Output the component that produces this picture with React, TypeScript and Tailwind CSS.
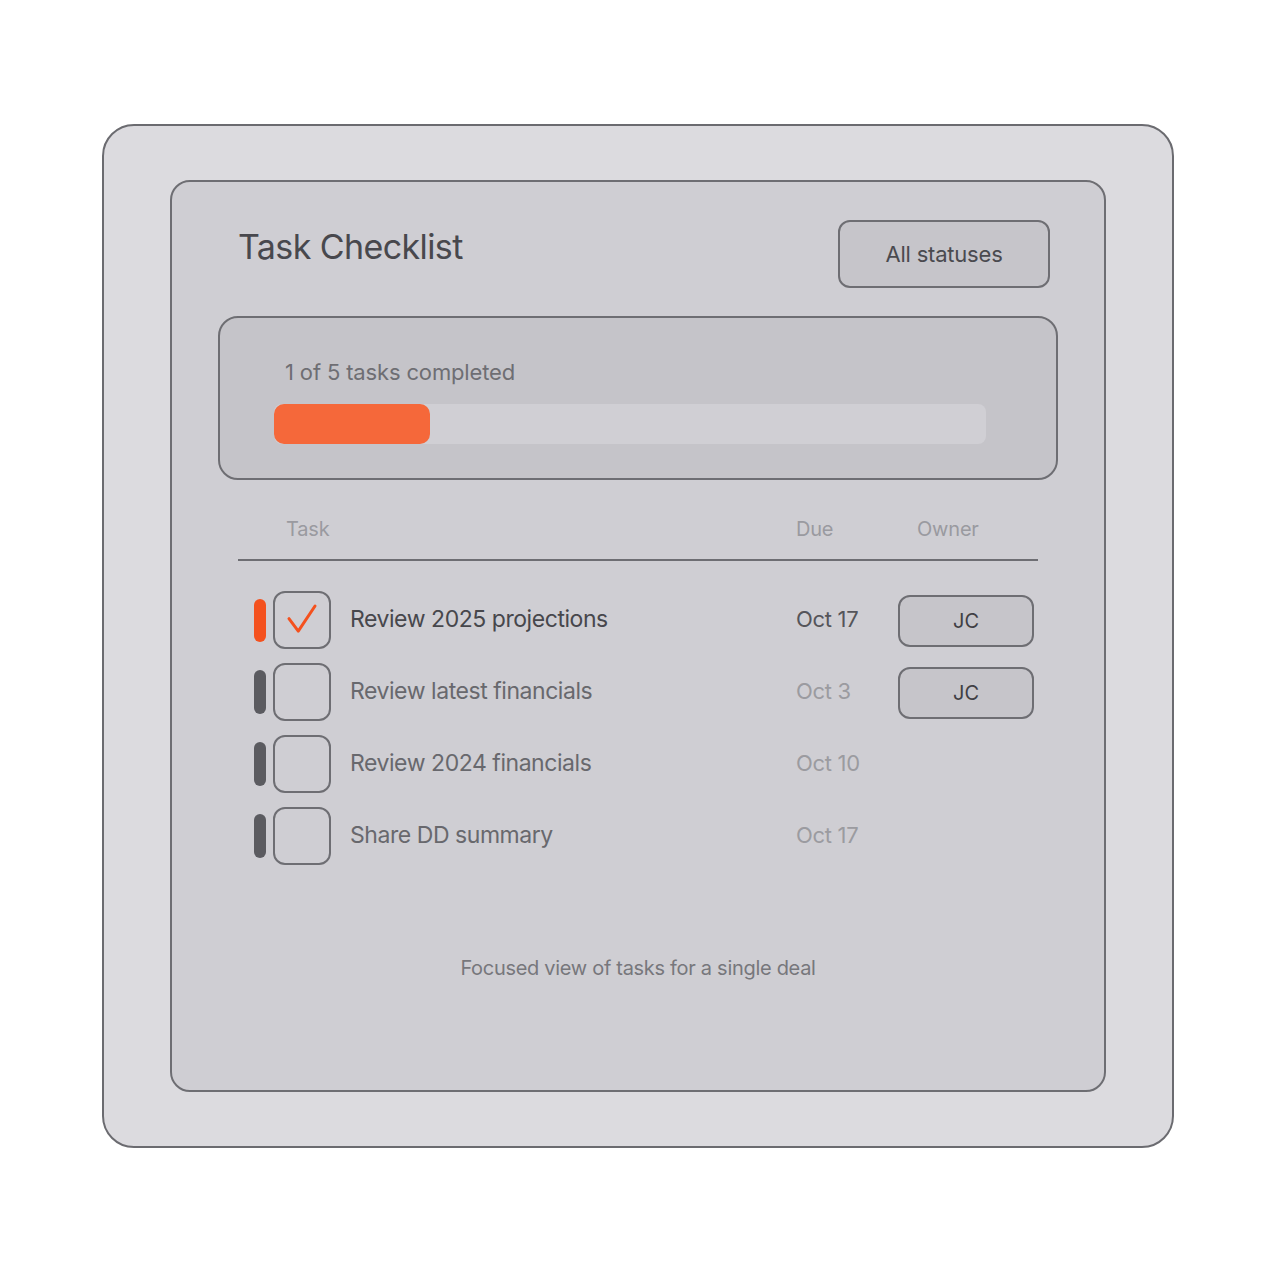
import React from 'react';

interface Task {
  title: string;
  due: string;
  owner?: string;
  done: boolean;
}

const tasks: Task[] = [
  { title: 'Review 2025 projections', due: 'Oct 17', owner: 'JC', done: true },
  { title: 'Review latest financials', due: 'Oct 3', owner: 'JC', done: false },
  { title: 'Review 2024 financials', due: 'Oct 10', done: false },
  { title: 'Share DD summary', due: 'Oct 17', done: false },
];

const TOTAL = 5;

function TaskRow({ task }: { key?: React.Key; task: Task }) {
  return (
    <div className="grid h-[58px] grid-cols-[112px_446px_102px_136px] items-center">
      <div className="flex items-center pl-[16px]">
        <div className={task.done ? 'h-[43px] w-[12px] rounded-full bg-[#f4511e]' : 'h-[44px] w-[12px] rounded-full bg-[#5b5b60]'} />
        <div className="ml-[7px] flex h-[58px] w-[58px] items-center justify-center rounded-[12px] border-2 border-[#6e6e73]">
          {task.done && (
            <svg width="58" height="58" viewBox="0 0 58 58" fill="none">
              <path d="M15 27.5 L25 41 L43 14" stroke="#f4511e" strokeWidth="3.2" strokeLinecap="round" strokeLinejoin="round" />
            </svg>
          )}
        </div>
      </div>
      <div className={task.done ? 'mt-[-1px] text-[23px] tracking-[-0.45px] text-[#47474c]' : 'mt-[-1px] text-[23px] tracking-[-0.45px] text-[#68686d]'}>{task.title}</div>
      <div className={task.done ? 'mt-[-1px] text-[22px] tracking-[-0.3px] text-[#55555a]' : 'mt-[-1px] text-[22px] tracking-[-0.3px] text-[#9b9ba0]'}>{task.due}</div>
      <div>
        {task.owner && (
          <div className="mt-[2px] flex h-[52px] w-[136px] items-center justify-center rounded-[12px] border-2 border-[#6e6e73] bg-[#c6c5ca] text-[20px] text-[#3f3f44]">
            {task.owner}
          </div>
        )}
      </div>
    </div>
  );
}

export default function App() {
  const completed = tasks.filter(t => t.done).length;

  return (
    <div className="min-h-[1280px] bg-white pl-[102px] pt-[124px] font-['Inter',_'Liberation_Sans',_sans-serif]">
      <div className="w-[1072px] h-[1024px] rounded-[32px] border-2 border-[#6b6b70] bg-[#dcdbdf] pl-[66px] pt-[54px]">
        <div className="flex h-[912px] w-[936px] flex-col rounded-[20px] border-2 border-[#6e6e73] bg-[#cfced3]">
          {/* header */}
          <div className="flex items-start justify-between pl-[66px] pr-[54px] pt-[38px]">
            <h1 className="mt-[7px] text-[34px] leading-[40px] tracking-[-0.6px] text-[#48484d]">Task Checklist</h1>
            <button className="h-[68px] w-[212px] rounded-[12px] border-2 border-[#6e6e73] bg-[#c6c5ca] text-[22px] tracking-[-0.2px] text-[#4a4a4f]">
              All statuses
            </button>
          </div>

          {/* progress */}
          <div className="mx-[46px] mt-[28px] h-[164px] rounded-[20px] border-2 border-[#6e6e73] bg-[#c5c4c9] pl-[54px] pr-[70px] pt-[38px]">
            <div className="pl-[11px] text-[22px] leading-[32px] tracking-[-0.15px] text-[#6e6e73]">
              {completed} of {TOTAL} tasks completed
            </div>
            <div className="mt-[16px] h-[40px] w-[712px] rounded-[8px] bg-[#d0cfd4]">
              <div className="h-[40px] w-[156px] rounded-[10px] bg-[#f5683a]" />
            </div>
          </div>

          {/* table */}
          <div className="mx-[66px] mt-[30px]">
            <div className="grid h-[38px] grid-cols-[112px_446px_102px_136px] items-center text-[20px] tracking-[-0.2px] text-[#9a9aa0]">
              <div className="pl-[48px]">Task</div>
              <div />
              <div>Due</div>
              <div className="pl-[19px]">Owner</div>
            </div>
            <div className="mt-[11px] h-[2px] w-[800px] bg-[#6e6e73]" />
            <div className="mt-[30px] flex flex-col gap-[14px]">
              {tasks.map((task, i) => (
                <TaskRow key={i} task={task} />
              ))}
            </div>
          </div>

          <div className="mt-[88px] text-center text-[20px] tracking-[-0.3px] text-[#77777c]">
            Focused view of tasks for a single deal
          </div>
        </div>
      </div>
    </div>
  );
}
